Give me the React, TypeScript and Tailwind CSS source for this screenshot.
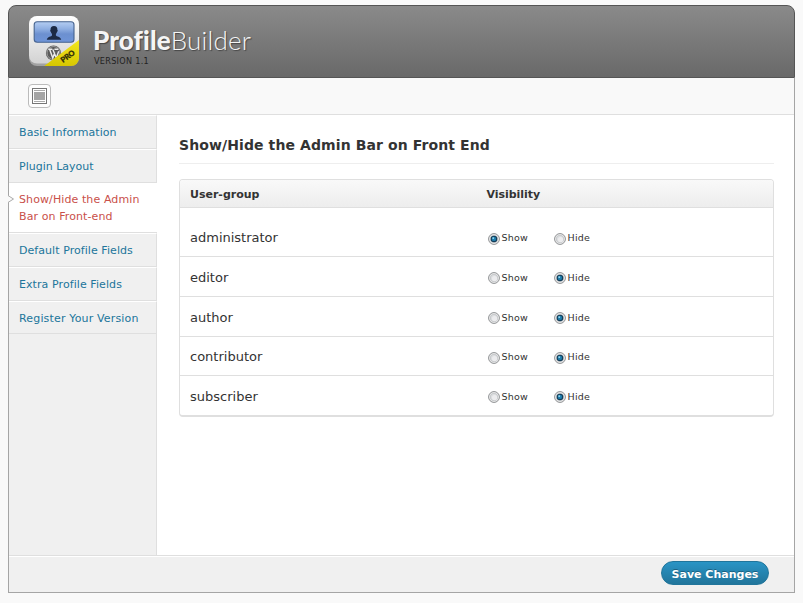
import React, { useState } from 'react';

const navTop = [
  { label: 'Basic Information', tracking: 'tracking-[0.08px]' },
  { label: 'Plugin Layout', tracking: 'tracking-normal' },
];
const navBottom = [
  { label: 'Default Profile Fields', tracking: 'tracking-[0.06px]' },
  { label: 'Extra Profile Fields', tracking: 'tracking-[0.08px]' },
  { label: 'Register Your Version', tracking: 'tracking-[0.16px]' },
];

const groups = [
  { name: 'administrator', row: 'h-[49px] pt-[12px]', visible: true },
  { name: 'editor', row: 'h-[40px] pt-[2px]', visible: false },
  { name: 'author', row: 'h-[40px] pt-[2px]', visible: false },
  { name: 'contributor', row: 'h-[39px] pt-[2px]', visible: false },
  { name: 'subscriber', row: 'h-[39px] pt-[2px]', visible: false },
];

function Logo() {
  return (
    <svg width="52" height="52" viewBox="0 0 52 52" className="block shrink-0">
      <defs>
        <linearGradient id="shell" x1="0" y1="0" x2="0" y2="1">
          <stop offset="0" stopColor="#ffffff" />
          <stop offset=".5" stopColor="#e8e8e8" />
          <stop offset="1" stopColor="#d2d2d2" />
        </linearGradient>
        <linearGradient id="screen" x1="0" y1="0" x2="0" y2="1">
          <stop offset="0" stopColor="#b4cdf2" />
          <stop offset=".35" stopColor="#8fafe2" />
          <stop offset=".6" stopColor="#6c90d0" />
          <stop offset="1" stopColor="#6f95d8" />
        </linearGradient>
        <linearGradient id="ribbon" x1="0" y1="0" x2="0" y2="1">
          <stop offset="0" stopColor="#f3e820" />
          <stop offset="1" stopColor="#d6c600" />
        </linearGradient>
        <clipPath id="shape"><rect x="1" y="1" width="50" height="50" rx="8" /></clipPath>
      </defs>
      <rect x="1" y="1" width="50" height="50" rx="8" fill="#a2a2a2" />
      <rect x="1" y="1" width="50" height="47.5" rx="8" fill="url(#shell)" />
      <rect x="6.2" y="6.8" width="39.8" height="20.4" rx="3" fill="url(#screen)" stroke="#46638f" strokeWidth="1.1" />
      <path d="M26 11c2.400 0 3.500 1.600 3.400 3.900.6.2.3 1.600-.3 1.900-.2 1-.7 1.700-1.200 2.200v1.400c.5 1 4.900 1.200 5.300 4.300H18.800c.4-3.100 4.800-3.300 5.200-4.300v-1.400c-.5-.5-1-1.200-1.200-2.200-.6-.3-.9-1.700-.3-1.900-.1-2.300 1.100-3.900 3.500-3.900z" fill="#1c2a44" />
      <circle cx="25.500" cy="38" r="7.600" fill="#5a5a5a" />
      <circle cx="25.500" cy="38" r="6.500" fill="none" stroke="#c4c4c4" strokeWidth=".6" />
      <path d="M20.300 34.200h4M26.400 34.200h3.900M21.700 34.500l3.100 8.600 2-5.600M24.900 34.500l3.400 8.600 2.400-6.800" fill="none" stroke="#eaeaea" strokeWidth="1.400" />
      <g clipPath="url(#shape)">
        <path d="M15.500 51.500 51.500 24.500v27z" fill="url(#ribbon)" />
      </g>
      <text transform="translate(34.900 48) rotate(-36)" fontFamily="Lato, sans-serif" fontWeight="900" fontSize="7.600" textLength="15.500" fill="#2e2b08" stroke="#2e2b08" strokeWidth=".25">PRO</text>
    </svg>
  );
}

function RadioMark({ on }: { on: boolean }) {
  return (
    <svg width="12" height="12" viewBox="0 0 12 12" className="block shrink-0">
      <circle cx="6" cy="6" r="5.400" fill="#f6f6f6" stroke="#8b8d8f" strokeWidth="1" />
      <circle cx="6" cy="6" r="3.800" fill="#dcdee0" stroke="#b7babd" strokeWidth=".7" />
      {on ? (
        <>
          <circle cx="6" cy="6" r="3.300" fill="#123c58" />
          <circle cx="5.900" cy="5.900" r="2.200" fill="#2080b0" />
          <circle cx="5.200" cy="5.100" r=".9" fill="#a5e0f5" />
        </>
      ) : (
        <circle cx="6.600" cy="6.600" r="2.600" fill="#ececee" />
      )}
    </svg>
  );
}

function Option({ label, on, pick }: { label: string; on: boolean; pick: () => void }) {
  return (
    <button type="button" role="radio" aria-checked={on} onClick={pick} className="flex h-3 w-[66px] items-center gap-[1.500px] text-[9.500px] leading-3 tracking-[0.25px] text-[#333]">
      <span className="pt-px"><RadioMark on={on} /></span>
      <span>{label}</span>
    </button>
  );
}

function NavItem({ label, height, tracking }: { label: string; height: string; tracking: string }) {
  return (
    <a href="#" className={`block whitespace-nowrap border-t border-r border-b border-t-white border-r-[#dfdfdf] border-b-[#dfdfdf] pl-[10px] pt-[8px] leading-[17px] text-[#21759b] ${height} ${tracking}`}>
      {label}
    </a>
  );
}

export default function App() {
  const [visible, setVisible] = useState(groups.map((g) => g.visible));
  const choose = (index: number, value: boolean) => setVisible(visible.map((v, i) => (i === index ? value : v)));

  return (
    <div className="h-[603px] w-[803px] overflow-hidden bg-[#f9f9f9] pl-2 pt-[5px] font-['DejaVu_Sans',Verdana,sans-serif] text-[11px] text-[#333]">
      <div className="flex h-[588px] w-[787px] flex-col">
        <header className="flex h-[73px] shrink-0 rounded-t-[8px] border border-[#555] bg-linear-to-b from-[#8a8a8a] to-[#696969] pl-[19px] pt-[9px]">
          <Logo />
          <div className="pl-[13px] pt-[10px]">
            <h1 className="h-[31px] whitespace-nowrap font-['Lato',sans-serif] text-[26px] leading-[31px] text-[#f5f5f5] [text-shadow:1px_1px_1px_#444]">
              <span className="font-black tracking-[0.1px]">Profile</span><span className="font-light tracking-[0.2px]">Builder</span>
            </h1>
            <p className="whitespace-nowrap pl-px font-['DejaVu_Sans_Condensed','DejaVu_Sans',sans-serif] text-[9px] leading-[11px] tracking-[0.3px] text-[#222]">VERSION 1.1</p>
          </div>
        </header>

        <div className="flex min-h-0 flex-1 flex-col border-x border-b border-[#a5a5a5]">
          <div className="h-[37px] shrink-0 border-b border-[#dfdfdf] pl-[19px] pt-[6px]">
            <button type="button" aria-label="Expand all" className="flex h-6 w-[23px] items-center justify-center rounded-[4px] border border-[#bbb] bg-[#fdfdfd]">
              <span className="flex h-4 w-[15px] flex-col justify-between border border-[#777] bg-white p-px">
                <span className="h-px bg-[#aaa]" />
                <span className="h-2 bg-[#a5a5a5]" />
                <span className="h-px bg-[#aaa]" />
              </span>
            </button>
          </div>

          <div className="flex min-h-0 flex-1">
            <nav className="flex w-[148px] shrink-0 flex-col bg-[#f0f0f0]">
              {navTop.map((item) => <NavItem key={item.label} {...item} height="h-[34px]" />)}
              <a href="#" className="relative block h-[50px] whitespace-nowrap border-b border-[#dfdfdf] bg-white pl-[10px] pt-[8px] leading-[17px] tracking-[0.1px] text-[#c9504a]">
                <svg width="7" height="8" viewBox="0 0 7 8" className="absolute -left-px top-[12px]">
                  <path d="M0 .5v7L5.500 4z" fill="#f9f9f9" />
                  <path d="M0 .5 5.500 4 0 7.500" fill="none" stroke="#aaa" />
                </svg>
                Show/Hide the Admin<br />Bar on Front-end
              </a>
              {navBottom.map((item, i) => <NavItem key={item.label} {...item} height={i === 2 ? 'h-[33px]' : 'h-[34px]'} />)}
              <div className="flex-1 border-r border-[#dfdfdf]" />
            </nav>

            <main className="flex-1 bg-white pl-[22px] pr-5 pt-[20px]">
              <h2 className="h-[29px] whitespace-nowrap border-b border-[#eee] text-[14px] font-bold leading-[20px] tracking-[0.1px]">Show/Hide the Admin Bar on Front End</h2>
              <section className="mt-[15px] w-[595px] rounded-[4px] border border-b-2 border-[#dfdfdf]">
                <div className="flex h-7 rounded-t-[3px] border-b border-[#dfdfdf] bg-linear-to-b from-[#f9f9f9] to-[#ededed] pl-[10px] pt-px font-bold leading-[28px]">
                  <span className="w-[296.500px]">User-group</span>
                  <span className="tracking-[-0.05px]">Visibility</span>
                </div>
                {groups.map((group, i) => (
                  <div key={group.name} className={`flex items-center border-b border-[#dfdfdf] pl-[10px] last:border-b-0 ${group.row}`}>
                    <span className="w-[298px] text-[13px] leading-4">{group.name}</span>
                    <div role="radiogroup" className="flex">
                      <Option label="Show" on={visible[i]} pick={() => choose(i, true)} />
                      <Option label="Hide" on={!visible[i]} pick={() => choose(i, false)} />
                    </div>
                  </div>
                ))}
              </section>
            </main>
          </div>

          <footer className="flex h-[37px] shrink-0 justify-end border-t border-[#dfdfdf] bg-[#f0f0f0] pr-[25px] pt-[5px] shadow-[inset_0_1px_0_#fff]">
            <button type="button" className="h-[24px] w-[108px] whitespace-nowrap rounded-full border border-[#21759b] bg-linear-to-b from-[#2a94c5] to-[#21759b] pt-[2px] text-[11px] font-bold leading-[22px] text-white [text-shadow:0_-1px_0_rgba(0,0,0,0.3)]">Save Changes</button>
          </footer>
        </div>
      </div>
    </div>
  );
}
